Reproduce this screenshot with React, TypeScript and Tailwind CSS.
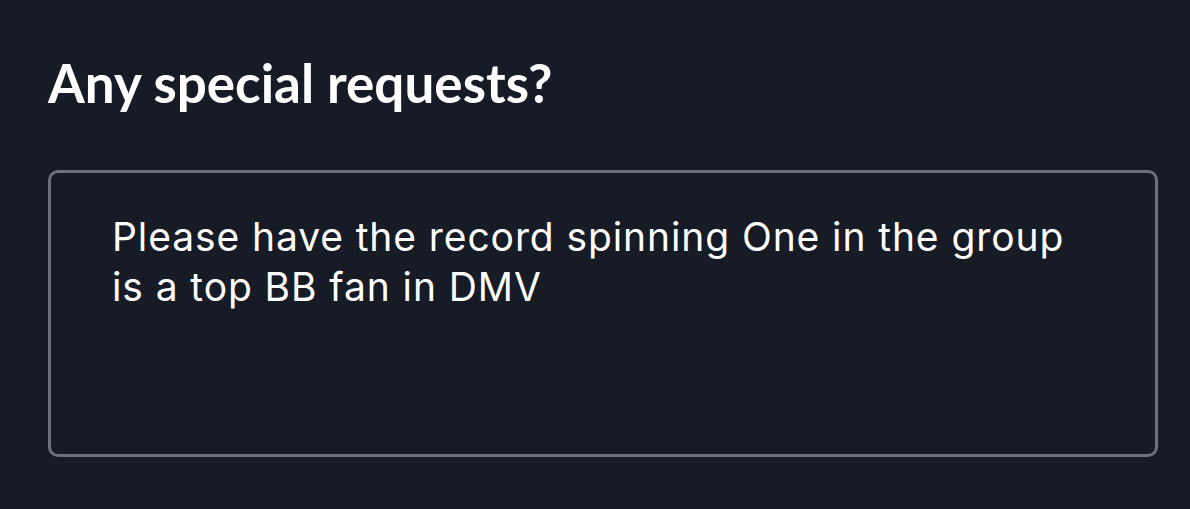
export default function App() {
  return (
    <div className="w-[1190px] h-[509px] bg-[#161b26] pt-[47px] px-[48px] overflow-hidden">
      <h1 className="text-white font-bold text-[53px] leading-[72px] tracking-[0px]" style={{ fontFamily: 'Lato, "Noto Sans", sans-serif' }}>
        Any special requests?
      </h1>
      <div className="mt-[51px] h-[287px] w-[1110px] rounded-[10px] border-[3px] border-[#6d7079] pl-[61px] pr-[40px] pt-[39px]">
        <p className="text-white text-[39px] leading-[50px] tracking-[0.9px] whitespace-nowrap" style={{ fontFamily: 'Inter, "Noto Sans", sans-serif' }}>
          Please have the record spinning One in the group
          <br />
          is a top BB fan in DMV
        </p>
      </div>
    </div>
  );
}
